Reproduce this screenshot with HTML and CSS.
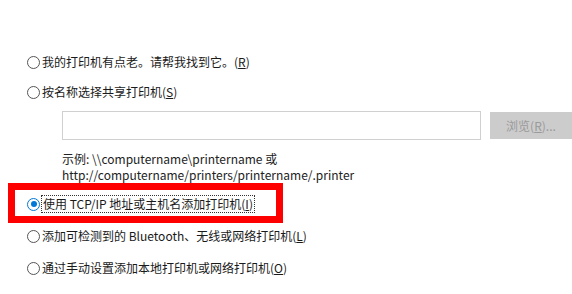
FILE: index.html
```html
<!DOCTYPE html>
<html lang="zh-CN">
<head>
<meta charset="utf-8">
<link rel="stylesheet" href="styles.css">
</head>
<body>
<div class="page">
  <div class="options">
    <label class="opt first"><span class="radio"></span><span class="lbl">我的打印机有点老。请帮我找到它。(<u>R</u>)</span></label>
    <label class="opt"><span class="radio"></span><span class="lbl">按名称选择共享打印机(<u>S</u>)</span></label>
    <div class="share">
      <div class="inputrow">
        <div class="input"></div>
        <div class="btn">浏览(<u>R</u>)...</div>
      </div>
      <div class="example">示例: \\computername\printername 或<br>http://computername/printers/printername/.printer</div>
    </div>
    <label class="opt sel"><span class="radio on"></span><span class="lbl focus">使用 TCP/IP 地址或主机名添加打印机(<u>I</u>)</span><span class="mark"></span></label>
    <label class="opt"><span class="radio"></span><span class="lbl">添加可检测到的 Bluetooth、无线或网络打印机(<u>L</u>)</span></label>
    <label class="opt"><span class="radio"></span><span class="lbl">通过手动设置添加本地打印机或网络打印机(<u>O</u>)</span></label>
  </div>
</div>
</body>
</html>
```
FILE: styles.css
```css
html, body {
  margin: 0;
  padding: 0;
  background: #ffffff;
}
body {
  width: 572px;
  height: 294px;
  overflow: hidden;
  font-family: "Noto Sans CJK SC", "Noto Sans", sans-serif;
  font-size: 12px;
  color: #1a1a1a;
}
.page {
  position: relative;
  padding-left: 27px;
}
.options {
  padding-top: 53px;
}
.opt {
  position: relative;
  display: flex;
  align-items: center;
  height: 18px;
  margin-bottom: 14px;
}
.opt.first {
  margin-bottom: 12px;
}
.radio {
  width: 11px;
  height: 11px;
  border: 1px solid #555;
  border-radius: 50%;
  margin-right: 2px;
  box-sizing: content-box;
  position: relative;
  flex-shrink: 0;
}
.radio.on {
  border-color: #0078d7;
}
.radio.on::after {
  content: "";
  position: absolute;
  left: 2.5px;
  top: 2.5px;
  width: 6px;
  height: 6px;
  border-radius: 50%;
  background: #0078d7;
}
.lbl {
  line-height: 16px;
  white-space: nowrap;
}
.focus {
  outline: 1px dotted #333;
  outline-offset: 0;
  padding: 0 1px;
}
.share {
  padding-left: 35px;
  margin-top: -4px;
  margin-bottom: 12px;
}
.inputrow {
  display: flex;
  gap: 9px;
}
.input {
  flex-shrink: 0;
  width: 417px;
  height: 27px;
  border: 1px solid #d0d0d0;
  background: #fff;
}
.btn {
  flex-shrink: 0;
  width: 82px;
  height: 27px;
  background: #cccccc;
  color: #9a9a9a;
  display: flex;
  align-items: center;
  justify-content: center;
  margin-top: 1px;
}
.example {
  margin-top: 11px;
  line-height: 16px;
  color: #222;
}
.mark {
  position: absolute;
  left: -19px;
  top: -12px;
  width: 261px;
  height: 26px;
  border: 7px solid #ff0000;
}
```
